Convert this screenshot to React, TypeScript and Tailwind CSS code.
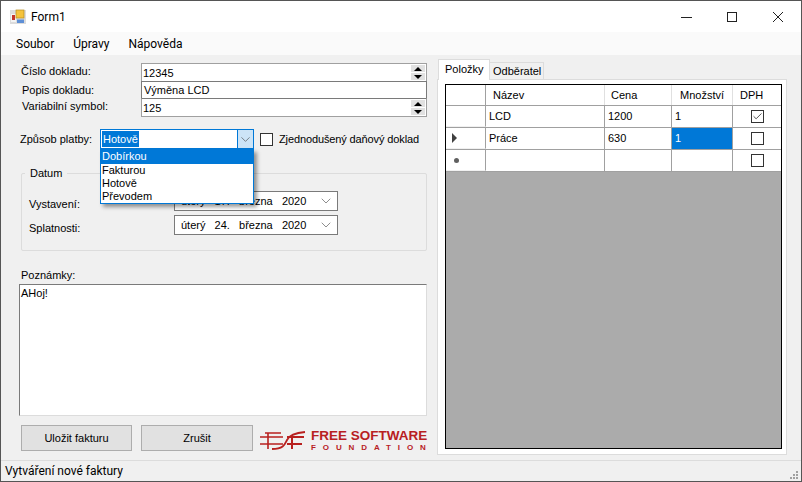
import { Check, ChevronDown } from "lucide-react";

const Spinner = () => (
  <div className="flex flex-col gap-px w-[14px] h-[15px] shrink-0 mr-px">
    <div className="flex-1 bg-[#e1e1e1] flex items-center justify-center">
      <div className="w-0 h-0 border-x-[4px] border-x-transparent border-b-[4px] border-b-black" />
    </div>
    <div className="flex-1 bg-[#e1e1e1] flex items-center justify-center">
      <div className="w-0 h-0 border-x-[4px] border-x-transparent border-t-[4px] border-t-black" />
    </div>
  </div>
);

const DatePicker = ({ text }: { text: string }) => (
  <div className="w-[164px] h-[20px] shrink-0 bg-white border border-[#7a7a7a] flex items-center pl-[6px] pr-[3px] justify-between">
    <span className="whitespace-pre">{text}</span>
    <ChevronDown className="w-[16px] h-[16px] text-[#555]" strokeWidth={1} />
  </div>
);

const CheckBox = ({ checked }: { checked?: boolean }) => (
  <div className="w-[13px] h-[13px] shrink-0 bg-white border border-[#333] flex items-center justify-center">
    {checked && <Check className="w-[11px] h-[11px] text-[#444]" strokeWidth={2} />}
  </div>
);

const FsfLogo = () => (
  <svg width="46" height="20" viewBox="0 0 46 20" fill="none" stroke="#b8201f" className="shrink-0">
    <path d="M0 6 H23 M0 13 H23 M8 2 V18 M5 2 H21" strokeWidth="1.6" />
    <path d="M12 18 C24 18 25 13 27 9 C29 5 34 2 45 1" strokeWidth="1.8" />
    <path d="M27 6 H44 M27 13 H42 M32 6 V18" strokeWidth="2" />
  </svg>
);

const rows = [
  { name: "LCD", price: "1200", qty: "1", vat: true },
  { name: "Práce", price: "630", qty: "1", vat: false, current: true },
  { name: "", price: "", qty: "", vat: false, isNew: true },
];

export default function App() {
  return (
    <div className="w-[802px] h-[482px] flex flex-col bg-[#f0f0f0] border border-[#555] text-[11px] leading-[16px] text-black overflow-hidden font-['Liberation_Sans',sans-serif]">
      {/* Title bar */}
      <div className="h-[31px] shrink-0 bg-white flex items-center">
        <svg width="16" height="16" viewBox="0 0 16 16" className="ml-[9px] mr-[5px] shrink-0">
          <rect x="0" y="1" width="16" height="14" fill="#dcdcdc" />
          <rect x="1" y="5" width="5" height="8" fill="#f4f4f4" />
          <rect x="2" y="6" width="3" height="5" fill="#c4352b" />
          <rect x="6" y="1" width="8" height="8" fill="#f5c33b" stroke="#b58a1e" strokeWidth="0.7" />
          <rect x="7" y="10.5" width="7" height="3.5" fill="#5d8fd6" />
        </svg>
        <span className="text-[12px] font-['Roboto',sans-serif]">Form1</span>
        <div className="ml-auto flex h-full items-center">
          <div className="w-[46px] flex justify-center">
            <svg width="12" height="12" viewBox="0 0 12 12" stroke="#222" fill="none"><path d="M1 6.5 H12" /></svg>
          </div>
          <div className="w-[46px] flex justify-center">
            <div className="w-[10px] h-[10px] border border-[#222]" />
          </div>
          <div className="w-[46px] flex justify-center">
            <svg width="12" height="12" viewBox="0 0 12 12" stroke="#222" fill="none"><path d="M1 1 L11 11 M11 1 L1 11" /></svg>
          </div>
        </div>
      </div>

      {/* Menu */}
      <div className="h-[23px] shrink-0 bg-[#fafafa] flex items-center pl-[15px] gap-[19px] text-[12px] font-['Roboto',sans-serif]">
        <span>Soubor</span>
        <span>Úpravy</span>
        <span>Nápověda</span>
      </div>

      {/* Body */}
      <div className="flex-1 flex min-h-0">
        {/* Left column */}
        <div className="w-[406px] ml-[20px] shrink-0 pt-[8px] flex flex-col relative">
          <div className="flex h-[18px]">
            <span className="w-[120px] shrink-0 leading-[16px]">Číslo dokladu:</span>
            <div className="flex-1 bg-white border border-[#a0a0a0] border-b-0 flex items-center justify-between pl-px">
              <span>12345</span>
              <Spinner />
            </div>
          </div>
          <div className="flex h-[17px]">
            <span className="w-[120px] shrink-0 pl-px leading-[18px]">Popis dokladu:</span>
            <div className="flex-1 bg-white border border-[#7a7a7a] border-b-0 flex items-center pl-[2px]">Výměna LCD</div>
          </div>
          <div className="flex h-[19px]">
            <span className="w-[120px] shrink-0 pl-px leading-[16px]">Variabilní symbol:</span>
            <div className="flex-1 bg-white border border-[#a0a0a0] border-t-[#7a7a7a] flex items-center justify-between pl-px">
              <span>125</span>
              <Spinner />
            </div>
          </div>

          {/* Payment */}
          <div className="flex items-center h-[20px] mt-[12px] -ml-px">
            <span className="w-[80px] shrink-0">Způsob platby:</span>
            <div className="w-[154px] h-[20px] shrink-0 bg-white border border-[#0078d7] flex items-stretch relative z-20">
              <div className="flex-1 flex items-center pl-px">
                <span className="bg-[#0078d7] text-white px-px">Hotově</span>
              </div>
              <div className="w-[16px] bg-[#cce4f7] border-l border-[#0078d7] flex items-center justify-center">
                <ChevronDown className="w-[15px] h-[15px] text-[#444]" strokeWidth={1} />
              </div>
              {/* Dropdown list */}
              <div className="absolute left-[-1px] top-[19px] w-[154px] h-[55px] bg-white border border-[#0078d7] shadow-[3px_3px_4px_rgba(0,0,0,0.4)] flex flex-col leading-[13px]">
                <div className="bg-[#0078d7] text-white h-[14px] pl-px">Dobírkou</div>
                <div className="h-[13px] pl-px">Fakturou</div>
                <div className="h-[13px] pl-px">Hotově</div>
                <div className="h-[13px] pl-px">Převodem</div>
              </div>
            </div>
            <div className="ml-[6px]"><CheckBox /></div>
            <span className="ml-[6px] whitespace-nowrap tracking-[-0.12px]">Zjednodušený daňový doklad</span>
          </div>

          {/* Date group */}
          <div className="mt-[24px] h-[78px] border border-[#dcdcdc] rounded-[2px] relative pt-[17px] pl-[7px] flex flex-col gap-[4px]">
            <span className="absolute left-[3px] top-[-9px] bg-[#f0f0f0] px-[5px]">Datum</span>
            <div className="flex h-[20px] justify-between w-[309px]">
              <span className="pt-[5px]">Vystavení:</span>
              <DatePicker text="úterý   17.   března   2020" />
            </div>
            <div className="flex h-[20px] justify-between w-[309px]">
              <span className="pt-[5px]">Splatnosti:</span>
              <DatePicker text="úterý   24.   března   2020" />
            </div>
          </div>

          {/* Notes */}
          <div className="mt-[16px] leading-[16px]">Poznámky:</div>
          <div className="mt-[1px] -ml-[2px] w-[408px] h-[132px] bg-white border border-[#dcdcdc] border-t-[#7a7a7a] border-l-[#7a7a7a] pl-px">AHoj!</div>

          {/* Buttons */}
          <div className="mt-[8px] flex items-center">
            <div className="w-[111px] h-[26px] shrink-0 bg-[#e1e1e1] border border-[#adadad] flex items-center justify-center">Uložit fakturu</div>
            <div className="ml-[9px] w-[112px] h-[26px] shrink-0 bg-[#e1e1e1] border border-[#adadad] flex items-center justify-center">Zrušit</div>
            <div className="ml-[7px] flex items-center gap-[5px] mt-[5px] shrink-0">
              <FsfLogo />
              <div className="flex flex-col text-[#b8201f]">
                <span className="text-[13.5px] leading-[13px] font-bold whitespace-nowrap">FREE SOFTWARE</span>
                <span className="text-[8px] leading-[9px] mt-[1px] font-bold whitespace-nowrap tracking-[6.9px]">FOUNDATION</span>
              </div>
            </div>
          </div>
        </div>

        {/* Right column */}
        <div className="ml-[10px] w-[350px] shrink-0 pt-[4px] flex flex-col pb-[5px]">
          <div className="flex items-end h-[21px] pl-px">
            <div className="w-[52px] h-[21px] bg-white border border-b-0 border-[#dcdcdc] pl-[6px] relative z-10 leading-[18px]">Položky</div>
            <div className="w-[54px] h-[18px] bg-[#f0f0f0] border border-b-0 border-l-0 border-[#dcdcdc] pl-[3px] leading-[17px]">Odběratel</div>
          </div>
          <div className="flex-1 bg-white border border-[#dcdcdc] -mt-px pt-[4px] pb-[5px] pl-[7px] pr-[4px]">
            <div className="h-full border border-black bg-[#ababab] flex flex-col">
              <div className="grid grid-cols-[40px_119px_67px_61px_1fr] h-[21px] bg-white border-b border-[#a0a0a0]">
                <div className="border-r border-[#a0a0a0]" />
                <div className="border-r border-[#e0e0e0] pl-[7px] leading-[20px]">Název</div>
                <div className="border-r border-[#e0e0e0] pl-[6px] leading-[20px]">Cena</div>
                <div className="border-r border-[#e0e0e0] text-center leading-[20px]">Množství</div>
                <div className="pl-[7px] leading-[20px]">DPH</div>
              </div>
              {rows.map((r) => (
                <div key={r.name + r.price} className="grid grid-cols-[40px_119px_67px_61px_1fr] h-[22px] bg-white border-b border-[#a0a0a0]">
                  <div className="border-r border-[#a0a0a0] flex items-center pl-[6px] border-b border-b-[#f0f0f0]">
                    {r.current && <div className="w-0 h-0 border-y-[5px] border-y-transparent border-l-[5px] border-l-[#404040]" />}
                    {r.isNew && <div className="ml-[2px] w-[5px] h-[5px] rounded-full bg-[#606060]" />}
                  </div>
                  <div className="border-r border-[#a0a0a0] pl-[3px] leading-[21px]">{r.name}</div>
                  <div className="border-r border-[#a0a0a0] pl-[3px] leading-[21px]">{r.price}</div>
                  <div className={`border-r border-[#a0a0a0] pl-[3px] leading-[21px] ${r.current ? "bg-[#0078d7] text-white" : ""}`}>{r.qty}</div>
                  <div className="flex items-center justify-center"><CheckBox checked={r.vat} /></div>
                </div>
              ))}
            </div>
          </div>
        </div>
      </div>

      {/* Status bar */}
      <div className="h-[21px] shrink-0 border-t border-[#dcdcdc] flex items-center justify-between pl-[4px] pr-[3px] text-[12px] font-['Roboto',sans-serif]">
        <span>Vytváření nové faktury</span>
        <div className="grid grid-cols-3 gap-px self-end mb-[2px]">
          <span /><span /><span className="w-[2px] h-[2px] bg-[#a0a0a0]" />
          <span /><span className="w-[2px] h-[2px] bg-[#a0a0a0]" /><span className="w-[2px] h-[2px] bg-[#a0a0a0]" />
          <span className="w-[2px] h-[2px] bg-[#a0a0a0]" /><span className="w-[2px] h-[2px] bg-[#a0a0a0]" /><span className="w-[2px] h-[2px] bg-[#a0a0a0]" />
        </div>
      </div>
    </div>
  );
}
